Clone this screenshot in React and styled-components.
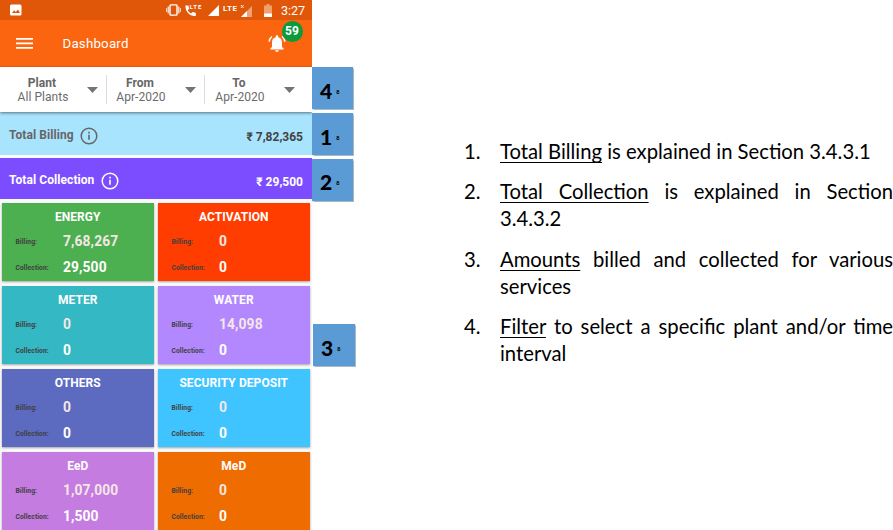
import React from "react";
import styled, { createGlobalStyle } from "styled-components";

const GlobalStyle = createGlobalStyle`
  * { box-sizing: border-box; }
  body { margin: 0; background: #fff; overflow: hidden; }
`;

const Page = styled.main`
  display: flex;
  width: 893px;
  height: 530px;
  overflow: hidden;
  background: #fff;
  font-family: Roboto, "Liberation Sans", sans-serif;
`;

const Phone = styled.section`
  width: 312px;
  height: 530px;
  flex: none;
  overflow: hidden;
  background: #fafafa;
`;

const StatusBar = styled.div`
  display: flex;
  align-items: center;
  justify-content: space-between;
  height: 20px;
  padding: 0 7px 0 10px;
  background: #e05709;
  color: #fff;
`;

const Clock = styled.span`
  font-size: 12.6px;
  line-height: 21px;
  letter-spacing: -0.1px;
`;

const StatusIcons = styled.div`
  display: flex;
  align-items: center;
`;

const Slot = styled.span`
  display: flex;
  margin-right: ${(p) => p.$after}px;
`;

const AppBar = styled.header`
  display: flex;
  align-items: center;
  height: 47px;
  padding: 0 22px 0 16px;
  background: #fb6510;
  color: #fff;
`;

const AppTitle = styled.h1`
  flex: 1;
  margin: 0 0 0 29.5px;
  font-size: 13.3px;
  font-weight: 400;
  line-height: 18px;
  letter-spacing: 0.2px;
`;

const Alerts = styled.div`
  position: relative;
  width: 22px;
  height: 20px;
`;

const Badge = styled.span`
  position: absolute;
  left: 13.5px;
  top: -13px;
  width: 21px;
  height: 21px;
  border-radius: 50%;
  background: #0a9c3c;
  font-size: 12px;
  font-weight: 700;
  line-height: 21px;
  text-align: center;
`;

const Filters = styled.div`
  position: relative;
  display: flex;
  height: 45px;
  padding-top: 8px;
  background: #fff;
  box-shadow: 0 1px 3px rgba(0, 0, 0, 0.5);
`;

const Filter = styled.div`
  display: flex;
  width: ${(p) => p.$width}px;
  height: 29px;
  padding-left: ${(p) => p.$pad}px;
  border-left: ${(p) => (p.$divided ? "1px solid #dcdcdc" : "none")};
`;

const FilterText = styled.div`
  width: ${(p) => p.$width}px;
  margin-right: ${(p) => p.$gap}px;
  color: #6b6b6b;
  font-size: 12px;
  line-height: 14px;
  letter-spacing: 0.05px;
  text-align: center;
  white-space: nowrap;
`;

const FilterName = styled.div`
  height: 15px;
  padding: 1px 2px 0 0;
  font-weight: 700;
  color: #666;
`;

const Caret = styled.svg`
  width: 11px;
  height: 6px;
  margin-top: 12px;
  fill: #757575;
`;

const Total = styled.div`
  display: flex;
  align-items: center;
  height: ${(p) => p.$height}px;
  margin-top: ${(p) => p.$gap}px;
  padding: 4px 9px 0;
  background: ${(p) => p.$bg};
  color: ${(p) => p.$color};
  font-size: 12px;
  font-weight: 700;
`;

const TotalName = styled.span`
  padding-bottom: 2px;
  margin-right: 6.5px;
  letter-spacing: 0.07px;
`;

const TotalAmount = styled.span`
  margin-left: auto;
  padding-top: 2px;
  color: ${(p) => p.$color};
`;

const Cards = styled.div`
  display: grid;
  grid-template-columns: 152.5px 152.5px;
  grid-auto-rows: 78px;
  gap: 5px 3.5px;
  padding: 4px 0 0 1.5px;
`;

const Card = styled.article`
  display: grid;
  grid-template-columns: 47.5px 1fr;
  grid-template-rows: 26px 26px 26px;
  align-items: center;
  padding-left: 14px;
  background: ${(p) => p.$bg};
  box-shadow: 0 1px 2px rgba(0, 0, 0, 0.35);
  color: #fff;
`;

const CardTitle = styled.h2`
  grid-column: 1 / -1;
  margin: 1px 0 0 -14px;
  font-size: 12px;
  font-weight: 700;
  line-height: 26px;
  letter-spacing: 0.07px;
  text-align: center;
`;

const CardLabel = styled.span`
  color: #404040;
  font-size: 6.7px;
  font-weight: 700;
  letter-spacing: 0.1px;
`;

const CardValue = styled.span`
  padding-bottom: 2px;
  font-size: 13.8px;
  font-weight: 700;
  letter-spacing: 0.12px;
  color: ${(p) => (p.$soft ? "#f5e7e5" : "#fff")};
`;

const Callouts = styled.aside`
  display: flex;
  flex-direction: column;
  width: 44px;
  padding-top: 67px;
  flex: none;
`;

const Callout = styled.div`
  display: flex;
  align-items: center;
  width: ${(p) => (p.$wide ? 42 : 41)}px;
  height: 42px;
  margin: 0 0 ${(p) => p.$after}px ${(p) => (p.$wide ? 1 : 0)}px;
  padding: 4px 0 0 8px;
  background: #5b9bd5;
  box-shadow: 0 0 1px 0.5px #aab8c6;
  color: #000;
  font-family: Lato, sans-serif;
  font-size: 21px;
  font-weight: 900;
`;

const CalloutMark = styled.span`
  margin: 3px 0 0 4px;
  font-size: 5.5px;
  line-height: 8px;
`;

const Notes = styled.ol`
  width: 537px;
  flex: none;
  margin: 0;
  padding: 138px 0 0 108px;
  list-style: none;
  color: #000;
  font-family: Lato, sans-serif;
  font-size: 20.25px;
  line-height: 27.2px;
`;

const Note = styled.li`
  display: grid;
  grid-template-columns: 36px 393px;
  margin-bottom: 13px;
`;

const NoteText = styled.p`
  margin: 0;
  text-align: justify;
`;

const Term = styled.span`
  text-decoration: underline;
  text-decoration-thickness: 1px;
  text-underline-offset: 3px;
  text-decoration-skip-ink: none;
`;

const PictureIcon = () => (
  <svg width="12" height="12" viewBox="0 0 12 12">
    <rect x="0" y="0.5" width="11.5" height="11" rx="1.5" fill="#fff" />
    <path d="M2 9l2.2-2.8 1.6 1.7L8 5.5 10 9z" fill="#e05709" />
  </svg>
);

const VibrateIcon = () => (
  <svg width="15" height="12" viewBox="0 0 15 12" fill="none" stroke="#fff" strokeWidth="1.4">
    <rect x="4" y="0.9" width="7" height="10.2" rx="0.8" />
    <path d="M2.2 2.5v7M12.8 2.5v7" strokeWidth="1.1" />
    <path d="M.6 4v4M14.4 4v4" strokeWidth="0.8" />
  </svg>
);

const CallIcon = () => (
  <svg width="17" height="13" viewBox="0 0 17 13" fill="#fff">
    <path d="M.4 1.5h3l.8 3.200-1.500 1.500c.8 1.500 1.900 2.500 3.400 3.200l1.500-1.500 3.200.8v3.200C5.200 12.600.2 8.300.4 1.500z" />
    <text x="4.800" y="5.200" fontSize="6" fontWeight="700" textLength="11.500">LTE</text>
  </svg>
);

const SignalIcon = () => (
  <svg width="11" height="11" viewBox="0 0 11 11">
    <path d="M11 0v11H0z" fill="#fff" />
  </svg>
);

const LteSignalIcon = () => (
  <svg width="30" height="13" viewBox="0 0 30 13" fill="#fff">
    <text x="0" y="7" fontSize="8" fontWeight="700" textLength="14">LTE</text>
    <path d="M29 2v11H18z" opacity="0.45" />
    <path d="M24 7v6h-6z" />
    <path d="M18 1l1 1.500L18 4M20.500 1l-1 1.500 1 1.500" fill="none" stroke="#fff" strokeWidth="0.900" />
  </svg>
);

const BatteryIcon = () => (
  <svg width="8" height="13" viewBox="0 0 8 13">
    <path d="M2.500 0h3v1.500H8V13H0V1.500h2.500z" fill="#f0a06f" />
    <path d="M0 9.500h8V13H0z" fill="#fff" />
  </svg>
);

const MenuIcon = () => (
  <svg width="17" height="12" viewBox="0 0 17 12" fill="#fff">
    <path d="M0 .1h17v1.700H0zM0 4.600h17v1.700H0zM0 9.100h17v1.700H0z" />
  </svg>
);

const BellIcon = () => (
  <svg width="18" height="19" viewBox="0 0 18 19">
    <path
      d="M7.700 3.300V2.500a1.300 1.300 0 0 1 2.600 0v.8c2.500.6 3.700 2.500 3.700 5V13l1.600 1.600v.9H2.400v-.9L4 13V8.300c0-2.500 1.200-4.400 3.700-5zM7.300 16.300h3.400c0 1-.7 1.700-1.700 1.700s-1.700-.7-1.700-1.700z"
      fill="#fff"
    />
    <path d="M4 2.500C2.300 3.800 1.300 5.500 1.200 7.800M14 2.500c1.700 1.300 2.700 3 2.800 5.300" fill="none" stroke="#fff" strokeWidth="1.500" />
  </svg>
);

const InfoIcon = () => (
  <svg width="18" height="18" viewBox="0 0 18 18" fill="none" stroke="currentColor">
    <circle cx="9" cy="9" r="7.800" strokeWidth="1.500" />
    <path d="M9 7.800v5M9 4.700v1.700" strokeWidth="1.600" />
  </svg>
);

const statusIcons = [
  { Icon: VibrateIcon, after: 4 },
  { Icon: CallIcon, after: 6 },
  { Icon: SignalIcon, after: 4 },
  { Icon: LteSignalIcon, after: 11 },
  { Icon: BatteryIcon, after: 9 },
];

const filters = [
  { name: "Plant", value: "All Plants", width: 106, pad: 13, text: 60, gap: 14 },
  { name: "From", value: "Apr-2020", width: 98, pad: 3, text: 62, gap: 13 },
  { name: "To", value: "Apr-2020", width: 108, pad: 5, text: 60, gap: 14 },
];

const cards = [
  { title: "ENERGY", billing: "7,68,267", collection: "29,500", bg: "#4caf50" },
  { title: "ACTIVATION", billing: "0", collection: "0", bg: "#ff3d00" },
  { title: "METER", billing: "0", collection: "0", bg: "#34b8c3" },
  { title: "WATER", billing: "14,098", collection: "0", bg: "#b388ff" },
  { title: "OTHERS", billing: "0", collection: "0", bg: "#5c6bc0" },
  { title: "SECURITY DEPOSIT", billing: "0", collection: "0", bg: "#40c4ff" },
  { title: "EeD", billing: "1,07,000", collection: "1,500", bg: "#c47ce0" },
  { title: "MeD", billing: "0", collection: "0", bg: "#ef6c00" },
];

const callouts = [
  { label: "4", after: 4 },
  { label: "1", after: 3.5 },
  { label: "2", after: 123.5 },
  { label: "3", after: 0, wide: true },
];

const notes = [
  { term: "Total Billing", text: " is explained in Section 3.4.3.1" },
  { term: "Total Collection", text: " is explained in Section 3.4.3.2" },
  { term: "Amounts", text: " billed and collected for various services" },
  { term: "Filter", text: " to select a specific plant and/or time interval" },
];

export default function App() {
  return (
    <Page>
      <GlobalStyle />
      <Phone>
        <StatusBar>
          <PictureIcon />
          <StatusIcons>
            {statusIcons.map(({ Icon, after }, i) => (
              <Slot key={i} $after={after}>
                <Icon />
              </Slot>
            ))}
            <Clock>3:27</Clock>
          </StatusIcons>
        </StatusBar>
        <AppBar>
          <MenuIcon />
          <AppTitle>Dashboard</AppTitle>
          <Alerts>
            <BellIcon />
            <Badge>59</Badge>
          </Alerts>
        </AppBar>
        <Filters>
          {filters.map((f, i) => (
            <Filter key={f.name} $width={f.width} $pad={f.pad} $divided={i > 0}>
              <FilterText $width={f.text} $gap={f.gap}>
                <FilterName>{f.name}</FilterName>
                {f.value}
              </FilterText>
              <Caret viewBox="0 0 11 6">
                <path d="M0 0h11L5.500 6z" />
              </Caret>
            </Filter>
          ))}
        </Filters>
        <Total $bg="#a9e4ff" $color="#666" $height={43} $gap={0}>
          <TotalName>Total Billing</TotalName>
          <InfoIcon />
          <TotalAmount $color="#424242">₹ 7,82,365</TotalAmount>
        </Total>
        <Total $bg="#7c4dff" $color="#fff" $height={41} $gap={3}>
          <TotalName>Total Collection</TotalName>
          <InfoIcon />
          <TotalAmount $color="#fff">₹ 29,500</TotalAmount>
        </Total>
        <Cards>
          {cards.map((c) => (
            <Card key={c.title} $bg={c.bg}>
              <CardTitle>{c.title}</CardTitle>
              <CardLabel>Billing:</CardLabel>
              <CardValue $soft>{c.billing}</CardValue>
              <CardLabel>Collection:</CardLabel>
              <CardValue>{c.collection}</CardValue>
            </Card>
          ))}
        </Cards>
      </Phone>
      <Callouts>
        {callouts.map((c) => (
          <Callout key={c.label} $after={c.after} $wide={c.wide}>
            {c.label}
            <CalloutMark>8</CalloutMark>
          </Callout>
        ))}
      </Callouts>
      <Notes>
        {notes.map((n, i) => (
          <Note key={n.term}>
            <span>{i + 1}.</span>
            <NoteText>
              <Term>{n.term}</Term>
              {n.text}
            </NoteText>
          </Note>
        ))}
      </Notes>
    </Page>
  );
}
